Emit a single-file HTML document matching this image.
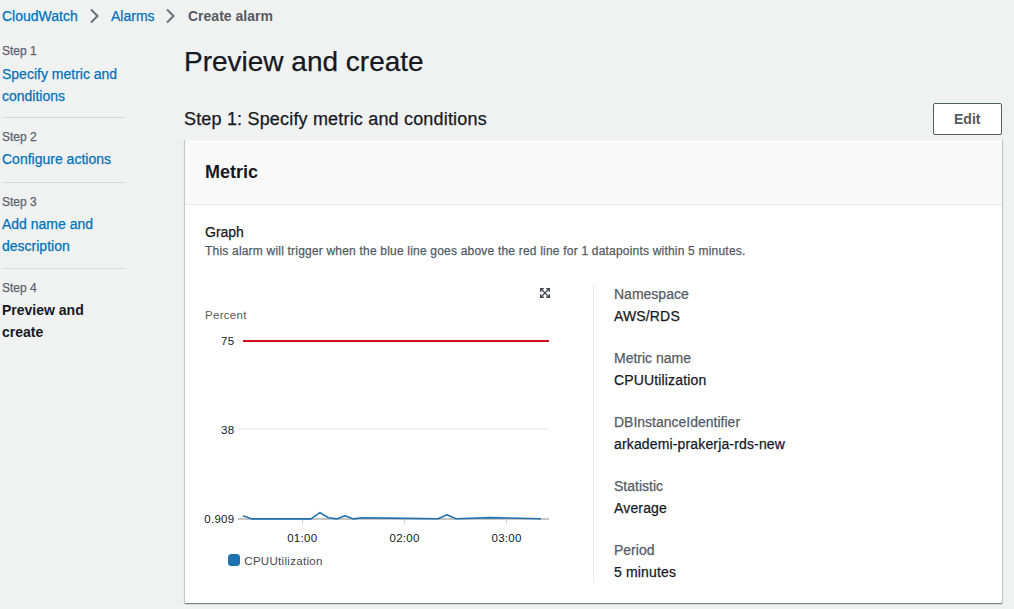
<!DOCTYPE html>
<html><head><meta charset="utf-8">
<style>
.a,svg text{-webkit-text-stroke:0.25px currentColor;}
.b{font-weight:700;-webkit-text-stroke:0;}
html,body{margin:0;padding:0;width:1014px;height:609px;overflow:hidden;background:#f0f1f1;font-family:"Liberation Sans",sans-serif;color:#16191f;}
.a{position:absolute;white-space:nowrap;}
.bc{font-size:14px;line-height:22px;}
.link{color:#0073bb;}
.lbl{font-size:12px;line-height:16px;color:#5c636c;}
.nl{font-size:14px;line-height:22px;}
.div{position:absolute;left:2px;width:123px;height:1px;background:#d5dbdb;}
.card{position:absolute;left:185px;top:139px;width:817px;height:463px;border-top:1px solid #eaeded;background:#fff;box-shadow:0 1px 1px 0 rgba(0,28,36,.3),1px 1px 1px 0 rgba(0,28,36,.15),-1px 1px 1px 0 rgba(0,28,36,.15);}
.hdr{position:absolute;left:0;top:0;width:817px;height:64px;background:#f9f9f9;border-bottom:1px solid #eaeded;}
.kl{font-size:14px;line-height:22px;color:#545b64;}
.kv{font-size:14px;line-height:22px;color:#16191f;letter-spacing:0.15px;}
</style></head>
<body>
<!-- breadcrumb -->
<div class="a bc link" style="left:2px;top:5px;">CloudWatch</div>
<svg class="a" style="left:88px;top:8px" width="12" height="16" viewBox="0 0 12 16"><path d="M3 1.5 L9.5 8 L3 14.5" fill="none" stroke="#687078" stroke-width="2"/></svg>
<div class="a bc link" style="left:111px;top:5px;">Alarms</div>
<svg class="a" style="left:164px;top:8px" width="12" height="16" viewBox="0 0 12 16"><path d="M3 1.5 L9.5 8 L3 14.5" fill="none" stroke="#687078" stroke-width="2"/></svg>
<div class="a bc b" style="left:188px;top:5px;color:#545b64;">Create alarm</div>

<!-- nav -->
<div class="a lbl" style="left:2px;top:43px;">Step 1</div>
<div class="a nl link" style="left:2px;top:63px;">Specify metric and</div>
<div class="a nl link" style="left:2px;top:85px;">conditions</div>
<div class="div" style="top:117px"></div>
<div class="a lbl" style="left:2px;top:129px;">Step 2</div>
<div class="a nl link" style="left:2px;top:148px;">Configure actions</div>
<div class="div" style="top:182px"></div>
<div class="a lbl" style="left:2px;top:194px;">Step 3</div>
<div class="a nl link" style="left:2px;top:213px;">Add name and</div>
<div class="a nl link" style="left:2px;top:235px;">description</div>
<div class="div" style="top:268px"></div>
<div class="a lbl" style="left:2px;top:280px;">Step 4</div>
<div class="a nl b" style="left:2px;top:299px;">Preview and</div>
<div class="a nl b" style="left:2px;top:321px;">create</div>

<!-- title -->
<div class="a" style="left:184px;top:45px;font-size:28px;line-height:34px;">Preview and create</div>
<div class="a" style="left:184px;top:108px;font-size:18px;line-height:22px;letter-spacing:0.18px;">Step 1: Specify metric and conditions</div>

<!-- edit button -->
<div class="a" style="left:933px;top:103px;width:67px;height:30px;border:1px solid #545b64;border-radius:2px;background:#fff;"></div>
<div class="a b" style="left:954px;top:108px;font-size:14px;line-height:22px;color:#545b64;">Edit</div>

<!-- card -->
<div class="card"><div class="hdr"></div></div>
<div class="a b" style="left:205px;top:161px;font-size:18px;line-height:22px;">Metric</div>
<div class="a" style="left:205px;top:221px;font-size:14px;line-height:22px;">Graph</div>
<div class="a" style="left:205px;top:243px;font-size:12px;line-height:16px;color:#545b64;letter-spacing:0.2px;">This alarm will trigger when the blue line goes above the red line for 1 datapoints within 5 minutes.</div>

<!-- chart -->
<svg class="a" style="left:0;top:0" width="1014" height="609" viewBox="0 0 1014 609" font-family="Liberation Sans" font-size="11.5" letter-spacing="0.3">
  <path d="M540.7 291.8 V288.7 H543.8 M546.2 288.7 H549.3 V291.8 M549.3 294.2 V297.3 H546.2 M543.8 297.3 H540.7 V294.2" fill="none" stroke="#414750" stroke-width="1.4"/><path d="M541 289 L549 297 M549 289 L541 297" fill="none" stroke="#414750" stroke-width="1.1"/>
  <text x="205" y="319" fill="#545b64">Percent</text>
  <text x="234.5" y="345" text-anchor="end" fill="#16191f">75</text>
  <text x="234.5" y="434" text-anchor="end" fill="#16191f">38</text>
  <text x="234.5" y="523" text-anchor="end" fill="#16191f">0.909</text>
  <line x1="238" y1="340.5" x2="549" y2="340.5" stroke="#e9ebed" stroke-width="1"/>
  <line x1="238" y1="429" x2="549" y2="429" stroke="#e9ebed" stroke-width="1"/>
  <line x1="243" y1="341" x2="549" y2="341" stroke="#d0111b" stroke-width="2"/>
  <line x1="238" y1="519" x2="549" y2="519" stroke="#c6c6c6" stroke-width="2"/>
  <line x1="302.5" y1="519.5" x2="302.5" y2="524.5" stroke="#d5d5d5" stroke-width="1"/>
  <line x1="404.5" y1="519.5" x2="404.5" y2="524.5" stroke="#d5d5d5" stroke-width="1"/>
  <line x1="506.5" y1="519.5" x2="506.5" y2="524.5" stroke="#d5d5d5" stroke-width="1"/>
  <polyline points="243,515.8 252,518.9 311,518.9 319.9,512.6 328.4,517.7 336.7,518.9 344.9,515.8 353.6,518.9 362,517.7 390,518.1 438.2,518.8 447,514.8 455.9,518.8 489.8,517.6 541,518.8" fill="none" stroke="#2272b0" stroke-width="1.6" stroke-linejoin="round"/>
  <text x="302.3" y="542" text-anchor="middle" fill="#16191f">01:00</text>
  <text x="404.6" y="542" text-anchor="middle" fill="#16191f">02:00</text>
  <text x="506.6" y="542" text-anchor="middle" fill="#16191f">03:00</text>
  <rect x="228" y="554" width="12" height="12" rx="3.5" fill="#1f72b0"/>
  <text x="244.3" y="564.6" fill="#444a52">CPUUtilization</text>
  <line x1="593.5" y1="283" x2="593.5" y2="582.5" stroke="#eaeded" stroke-width="1"/>
</svg>

<!-- key values -->
<div class="a kl" style="left:614px;top:283px;">Namespace</div>
<div class="a kv" style="left:614px;top:305px;">AWS/RDS</div>
<div class="a kl" style="left:614px;top:347px;">Metric name</div>
<div class="a kv" style="left:614px;top:369px;">CPUUtilization</div>
<div class="a kl" style="left:614px;top:411px;">DBInstanceIdentifier</div>
<div class="a kv" style="left:614px;top:433px;">arkademi-prakerja-rds-new</div>
<div class="a kl" style="left:614px;top:475px;">Statistic</div>
<div class="a kv" style="left:614px;top:497px;">Average</div>
<div class="a kl" style="left:614px;top:539px;">Period</div>
<div class="a kv" style="left:614px;top:561px;">5 minutes</div>
</body></html>
